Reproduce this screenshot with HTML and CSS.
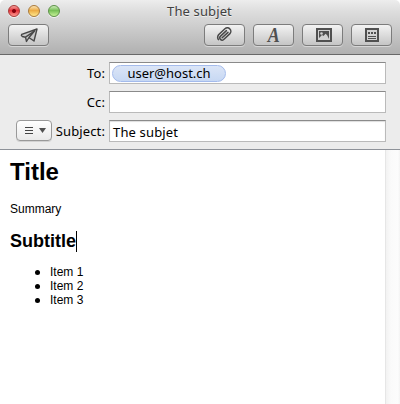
FILE: index.html
```html
<!DOCTYPE html>
<html lang="en">
<head>
<meta charset="utf-8">
<title>The subjet</title>
<link rel="stylesheet" href="styles.css">
</head>
<body>
<div class="window">
  <header class="chrome">
    <div class="titlebar">
      <div class="lights"><i class="light red"></i><i class="light yellow"></i><i class="light green"></i></div>
      <div class="window-title"><span>The subjet</span></div>
    </div>
    <div class="toolbar">
      <button class="tool send" aria-label="Send">
        <svg width="18" height="16" viewBox="0 0 18 16"><path d="M1 7.8 17 2 14 14 9.500 11 7 14 5.500 10.200 2 9.500Z" fill="#c8c8c8"/><path d="M1 7.600 17 2 14 14 9.500 11M1 7.600 2.200 9.500 5.500 10.200 14.500 4 9 10.500 6.500 14.500 5.500 10.200" fill="none" stroke="#484848" stroke-width="1.400" stroke-linejoin="round"/></svg>
      </button>
      <button class="tool" aria-label="Attach">
        <svg width="18" height="18" viewBox="0 0 18 18"><g transform="rotate(-43 9 9)" fill="none" stroke="#484848" stroke-width="1.500" stroke-linecap="round"><path d="M13 6.800H5a2.200 2.200 0 0 0 0 4.600H13.200a3.500 3.500 0 0 0 0-7H4.500a4.500 4.500 0 0 0-3.500 3.500"/><path d="M5 9.100H13"/></g></svg>
      </button>
      <button class="tool" aria-label="Format"><span class="format">A</span></button>
      <button class="tool" aria-label="Photo">
        <svg class="photo" width="16" height="14" viewBox="0 0 16 14"><path d="M0 0H16V14H0Z" fill="#505050"/><path d="M2 2H14V12H2Z" fill="#d2d2d2"/><path d="M3 3H13V11L11 7 9.500 5.800 7.500 8 6 7 3 10Z" fill="#505050"/><circle cx="5.500" cy="5.500" r="1.300" fill="#d2d2d2"/></svg>
      </button>
      <button class="tool" aria-label="Stationery">
        <svg width="14" height="14" viewBox="0 0 14 14"><path d="M0 0H14V14H0Z" fill="#505050"/><path d="M2 2H12V12H2Z" fill="#d2d2d2"/><path d="M3 4H5V6H3ZM6 4H8V6H6ZM9 4H11V6H9ZM3 8H11V9H3ZM3 10H11V11H3Z" fill="#505050"/></svg>
      </button>
    </div>
  </header>
  <section class="headers">
    <div class="row"><label><span>To:</span></label><div class="field"><span class="pill"><span>user@host.ch</span></span></div></div>
    <div class="row"><label><span>Cc:</span></label><div class="field"></div></div>
    <div class="row">
      <button class="options" aria-label="Options"><svg width="36" height="21" viewBox="0 0 36 21"><path d="M9 7H17M9 10H17M9 13H17" transform="translate(0 .5)" stroke="#444" fill="none"/><path d="M23 8H30L26.500 13Z" fill="#505050"/></svg></button>
      <label><span>Subject:</span></label><div class="field subject"><span>The subjet</span></div>
    </div>
  </section>
  <main class="message">
    <article class="content">
      <h1>Title</h1>
      <p>Summary</p>
      <h2><span>Subtitle</span><i class="caret"></i></h2>
      <ul><li>Item 1</li><li>Item 2</li><li>Item 3</li></ul>
    </article>
    <div class="scrollbar"></div>
  </main>
</div>
</body>
</html>
```

FILE: styles.css
```css
* { box-sizing: border-box; }
body { margin: 0; background: #fff; font: 13px/18px "Noto Sans", sans-serif; color: #000; }
button { padding: 0; margin: 0; font: inherit; }
svg { display: block; flex: none; }
.window { width: 400px; height: 404px; display: flex; flex-direction: column; overflow: hidden; border-radius: 5px 5px 0 0; }
.chrome { height: 55px; flex: none; background: linear-gradient(#ededed, #dedede 20%, #b0b0b0); border-bottom: 1px solid #686868; }
.titlebar { height: 24px; display: grid; grid-template-columns: 60px 1fr 60px; }
.lights { display: flex; gap: 8px; padding: 5px 0 0 8px; }
.light { width: 12px; height: 12px; flex: none; border-radius: 50%; border: 1px solid; box-shadow: 0 1px 0 #f2f2f2; }
.red { border-color: #a83a38; background: radial-gradient(circle at 50% 50%, #85000c 0 1.5px, transparent 2.4px), linear-gradient(#f3a19d, #e5333a 45%, #ff9c94); }
.yellow { border-color: #a9793a; background: linear-gradient(#fbe3b4, #edac45 45%, #ffe98c); }
.green { border-color: #5c9048; background: linear-gradient(#ccebb8, #77c057 45%, #c6f397); }
.window-title { display: flex; justify-content: center; color: #414141; padding: 2px 1px 0 0; text-shadow: 0 1px 0 #f1f1f1; letter-spacing: .12px; }
.toolbar { display: flex; gap: 8px; padding: 0 8px; }
.tool { width: 41px; height: 22px; border: 1px solid #7c7c7c; border-radius: 4px; background: linear-gradient(#f3f3f3, #c5c5c5); box-shadow: 0 1px 0 #d6d6d6; display: flex; align-items: center; justify-content: center; }
.send { margin-right: auto; }
.photo { margin-left: 2px; }
.format { font: italic bold 20px/20px "Liberation Serif", serif; color: #505050; transform: scaleX(.9); }
.headers { height: 95px; flex: none; padding: 7px 14px 0 16px; background: #ececec; border-bottom: 1px solid #8e9299; display: flex; flex-direction: column; gap: 7px; }
.row { height: 22px; display: flex; }
label { flex: 1; display: flex; justify-content: flex-end; padding: 2px 4px 0 0; letter-spacing: .12px; }
.field { width: 277px; height: 22px; background: #fff; border: 1px solid #bababa; border-top-color: #8a8a8a; flex: none; }
.pill { display: flex; justify-content: center; width: 114px; height: 17px; margin: 2px 0 0 2px; border: 1px solid #a4bbec; border-radius: 9px; background: linear-gradient(#dbe5f7, #c7d8f3); line-height: 15px; }
.subject { padding: 2px 3px; box-shadow: inset 0 1px 1px #ddd; letter-spacing: .15px; }
.options { width: 36px; height: 21px; border: 1px solid #999; border-radius: 4px; background: linear-gradient(#fff, #e9e9e9); display: flex; align-items: center; justify-content: center; box-shadow: 0 1px 0 #d2d2d2; }
.message { flex: 1; display: flex; font: 12px/14px "Liberation Sans", sans-serif; }
.content { flex: 1; padding: 8px 10px; }
h1 { font-size: 24px; line-height: 28px; margin: 0 0 16px; }
p { margin: 0 0 15px; }
h2 { display: flex; font-size: 18px; line-height: 21px; margin: 0 0 13px; }
.caret { width: 1px; height: 21px; background: #000; }
ul { margin: 0; padding-left: 40px; list-style: none; }
li { display: flex; align-items: center; }
li::before { content: ""; width: 5px; height: 5px; margin: 1px 10px 0 -15px; border-radius: 50%; background: #000; }
.scrollbar { width: 15px; flex: none; border-left: 1px solid #e6e6e6; background: linear-gradient(90deg, #f2f2f2, #fafafa 35%, #fcfcfc 85%, #f3f3f3); }
```
